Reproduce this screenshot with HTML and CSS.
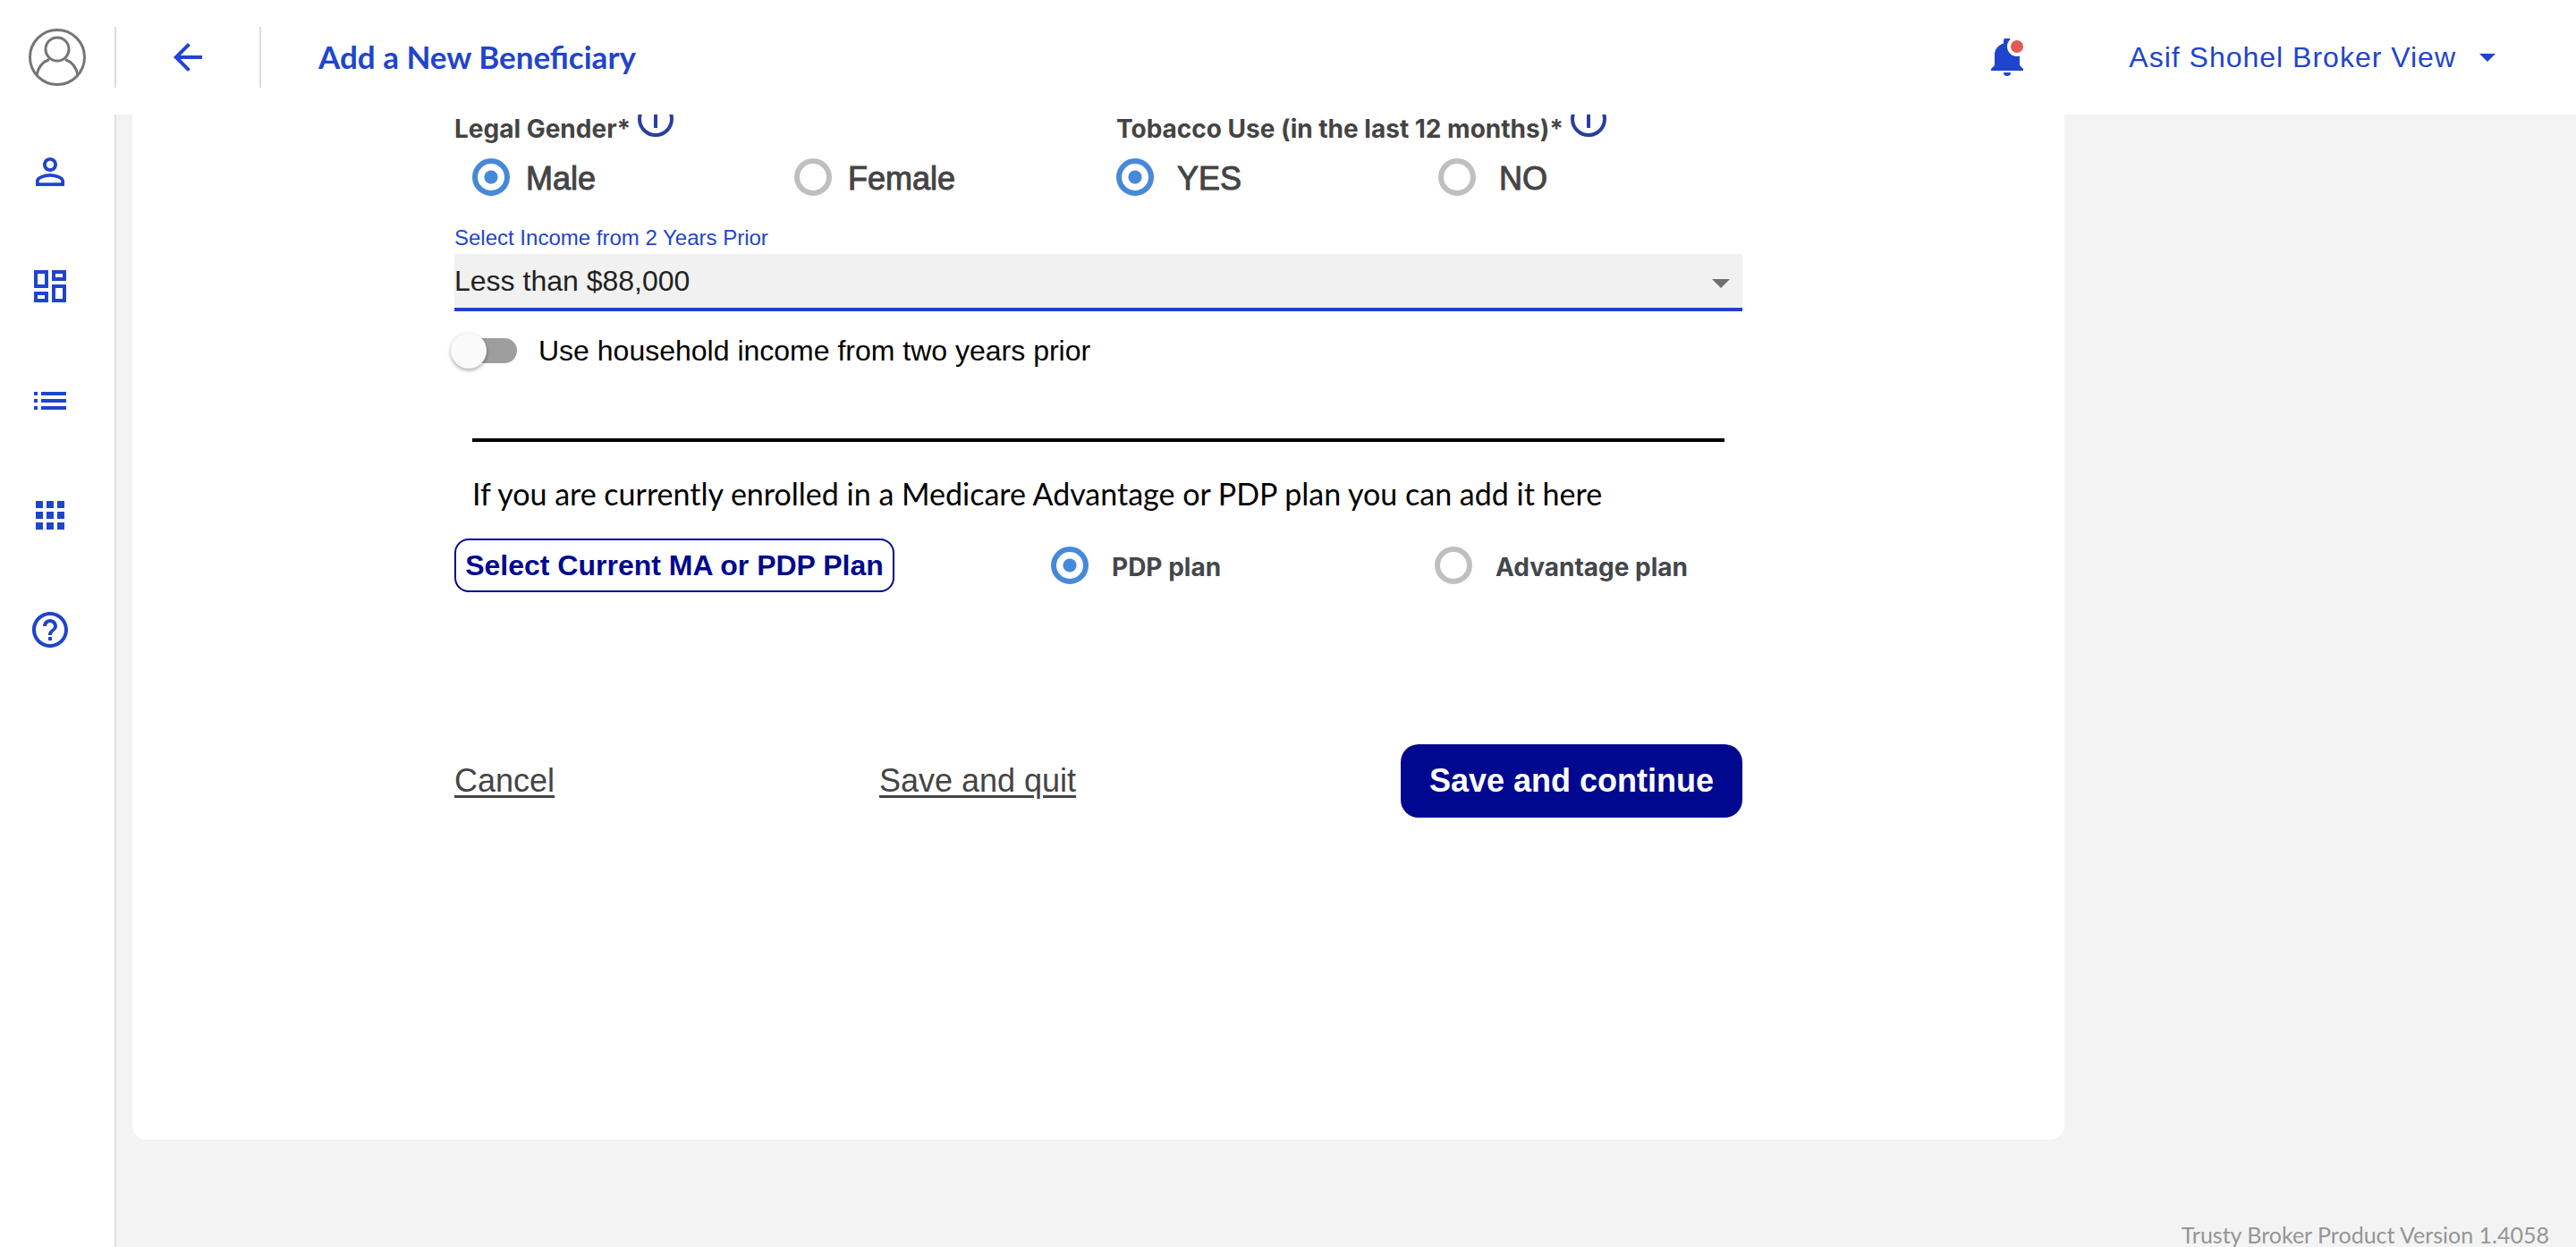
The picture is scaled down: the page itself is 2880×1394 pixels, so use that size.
FILE: index.html
```html
<!DOCTYPE html>
<html lang="en">
<head>
<meta charset="utf-8">
<meta name="viewport" content="width=device-width, initial-scale=1">
<title>Add a New Beneficiary</title>
<link rel="stylesheet" href="styles.css">
</head>
<body>
<header class="topbar">
  <a class="avatar" href="#" aria-label="Profile">
    <svg viewBox="0 0 64 64" fill="none" stroke="#757575" stroke-width="3"><circle cx="32" cy="32" r="30.500"/><circle cx="32" cy="23" r="13"/><path d="M9 52C10.500 44 15 37.500 23 34.500M55 52C53.500 44 49 37.500 41 34.500"/></svg>
  </a>
  <a class="back" href="#" aria-label="Back">
    <svg viewBox="0 0 24 24" fill="currentColor"><path d="M20 11H7.830l5.590-5.590L12 4l-8 8 8 8 1.410-1.410L7.830 13H20v-2z"/></svg>
  </a>
  <h1 class="title">Add a New Beneficiary</h1>
  <button class="bell" type="button" aria-label="Notifications">
    <svg viewBox="0 0 36 42"><path fill="#1f45cc" d="M14 3a4 4 0 0 1 8 0v2.500C28 7.500 32 12 32 18v12l4 4v2H0v-2l4-4V18C4 12 8 7.500 14 5.500z"/><path fill="#1f45cc" d="M14 38h8a4 4 0 0 1-8 0z"/><circle cx="29" cy="9" r="11" fill="#fff"/><circle cx="29" cy="9" r="7" fill="#e05a57"/></svg>
  </button>
  <button class="account" type="button">Asif Shohel Broker View
    <svg viewBox="0 0 18 9" fill="currentColor"><path d="M0 0h18L9 9z"/></svg>
  </button>
</header>
<div class="shell">
  <nav class="sidebar" aria-label="Main">
    <a href="#" aria-label="Beneficiaries"><svg viewBox="0 0 24 24" fill="currentColor"><path d="M12 5.900c1.160 0 2.100.94 2.100 2.100s-.94 2.100-2.100 2.100S9.900 9.160 9.900 8s.94-2.100 2.100-2.100m0 9c2.970 0 6.100 1.460 6.100 2.100v1.100H5.900V17c0-.64 3.130-2.100 6.100-2.100M12 4C9.790 4 8 5.790 8 8s1.790 4 4 4 4-1.790 4-4-1.790-4-4-4zm0 9c-2.670 0-8 1.340-8 4v3h16v-3c0-2.660-5.330-4-8-4z"/></svg></a>
    <a href="#" aria-label="Dashboard"><svg viewBox="0 0 24 24" fill="currentColor"><path d="M19 5v2h-4V5h4M9 5v6H5V5h4m10 8v6h-4v-6h4M9 17v2H5v-2h4M21 3h-8v6h8V3zM11 3H3v10h8V3zm10 8h-8v10h8V11zm-10 4H3v6h8v-6z"/></svg></a>
    <a href="#" aria-label="List"><svg viewBox="0 0 24 24" fill="currentColor"><path d="M3 13h2v-2H3v2zm0 4h2v-2H3v2zm0-8h2V7H3v2zm4 4h14v-2H7v2zm0 4h14v-2H7v2zM7 7v2h14V7H7z"/></svg></a>
    <a href="#" aria-label="Apps"><svg viewBox="0 0 24 24" fill="currentColor"><path d="M4 8h4V4H4v4zm6 12h4v-4h-4v4zm-6 0h4v-4H4v4zm0-6h4v-4H4v4zm6 0h4v-4h-4v4zm6-10v4h4V4h-4zm-6 4h4V4h-4v4zm6 6h4v-4h-4v4zm0 6h4v-4h-4v4z"/></svg></a>
    <a href="#" aria-label="Help"><svg viewBox="0 0 24 24" fill="currentColor"><path d="M11 18h2v-2h-2v2zm1-16C6.480 2 2 6.480 2 12s4.480 10 10 10 10-4.480 10-10S17.520 2 12 2zm0 18c-4.410 0-8-3.590-8-8s3.590-8 8-8 8 3.590 8 8-3.590 8-8 8zm0-14c-2.210 0-4 1.790-4 4h2c0-1.100.9-2 2-2s2 .9 2 2c0 2-3 1.750-3 5h2c0-2.250 3-2.500 3-5 0-2.210-1.790-4-4-4z"/></svg></a>
  </nav>
  <main class="content">
    <form class="card">
      <div class="questions">
        <div class="question" role="radiogroup" aria-labelledby="gender-label">
          <div class="question-head">
            <span id="gender-label">Legal Gender*</span>
            <svg class="info" viewBox="0 0 48 48" fill="none" stroke="#2a3f9d"><circle cx="24" cy="24" r="18" stroke-width="4"/><path d="M24 18v16M24 12v4" stroke-width="4"/></svg>
          </div>
          <div class="options options-inset">
            <label class="option"><input class="radio" type="radio" name="gender" checked><span>Male</span></label>
            <label class="option"><input class="radio" type="radio" name="gender"><span>Female</span></label>
          </div>
        </div>
        <div class="question" role="radiogroup" aria-labelledby="tobacco-label">
          <div class="question-head">
            <span id="tobacco-label">Tobacco Use (in the last 12 months)*</span>
            <svg class="info" viewBox="0 0 48 48" fill="none" stroke="#2a3f9d"><circle cx="24" cy="24" r="18" stroke-width="4"/><path d="M24 18v16M24 12v4" stroke-width="4"/></svg>
          </div>
          <div class="options">
            <label class="option option-wide"><input class="radio" type="radio" name="tobacco" checked><span>YES</span></label>
            <label class="option option-wide"><input class="radio" type="radio" name="tobacco"><span>NO</span></label>
          </div>
        </div>
      </div>
      <label class="field-label" for="income">Select Income from 2 Years Prior</label>
      <div class="select-wrap">
        <select class="select" id="income"><option>Less than $88,000</option></select>
        <svg class="select-arrow" viewBox="0 0 20 10" fill="#6f6f6f"><path d="M0 0h20L10 10z"/></svg>
      </div>
      <label class="switch-row"><input class="switch" type="checkbox">Use household income from two years prior</label>
      <hr class="rule">
      <p class="note">If you are currently enrolled in a Medicare Advantage or PDP plan you can add it here</p>
      <div class="plan-row">
        <button class="outline-button" type="button">Select Current MA or PDP Plan</button>
        <label class="plan"><input class="radio" type="radio" name="plan" checked><span>PDP plan</span></label>
        <label class="plan"><input class="radio" type="radio" name="plan"><span>Advantage plan</span></label>
      </div>
      <div class="actions">
        <a class="action-link" href="#">Cancel</a>
        <a class="action-link" href="#">Save and quit</a>
        <button class="primary-button" type="submit">Save and continue</button>
      </div>
    </form>
    <footer class="version">Trusty Broker Product Version 1.4058</footer>
  </main>
</div>
</body>
</html>
```
FILE: styles.css
```css
:root {
  --blue: #1f45cc;
  --navy: #00088f;
  --radio: #4689d9;
  --ink: #444;
  --sans: "Liberation Sans", Arial, sans-serif;
}
* { box-sizing: border-box; }
body {
  margin: 0;
  min-height: 100vh;
  display: flex;
  flex-direction: column;
  background: #f3f3f3;
  font-family: var(--sans);
  font-size: 32px;
  color: #000;
}
svg { display: block; }
button { font-family: inherit; border: 0; background: none; padding: 0; cursor: pointer; }

/* Top bar */
.topbar {
  position: sticky;
  top: 0;
  z-index: 2;
  display: flex;
  align-items: center;
  height: 128px;
  background: #fff;
  color: var(--blue);
}
.avatar { width: 128px; padding: 0 32px; }
.back {
  width: 164px;
  height: 68px;
  display: flex;
  align-items: center;
  justify-content: center;
  border: solid #dcdcdc;
  border-width: 0 2px;
  color: inherit;
}
.back svg { width: 48px; }
.title {
  flex: 1;
  margin: 0;
  padding: 0 0 2px 64px;
  font: 700 35px/44px Lato, sans-serif;
}
.bell svg { width: 36px; }
.account {
  display: flex;
  align-items: center;
  gap: 26px;
  margin-left: 118px;
  padding-right: 90px;
  font-size: 32px;
  letter-spacing: 1px;
  color: inherit;
}
.account svg { width: 18px; }

/* Sidebar and content */
.shell { flex: 1; display: flex; }
.sidebar {
  width: 130px;
  display: flex;
  flex-direction: column;
  padding: 40px 0 0 32px;
  gap: 80px;
  background: #fff;
  border-right: 2px solid #e0e0e0;
}
.sidebar a { width: 48px; color: var(--blue); }
.content {
  flex: 1;
  display: flex;
  flex-direction: column;
  justify-content: space-between;
  padding-left: 18px;
}
.card {
  max-width: 2160px;
  padding: 0 360px 360px;
  background: #fff;
  border-radius: 0 0 16px 16px;
}

/* Form */
.questions { display: grid; grid-template-columns: 37fr 35fr; }
.question-head {
  display: flex;
  height: 32px;
  align-items: center;
  gap: 4px;
  color: var(--ink);
  font: 700 28px/32px Inter, sans-serif;
}
.info { width: 48px; margin-top: -22px; }
.options { display: flex; padding-top: 16px; color: var(--ink); }
.options-inset { padding-left: 20px; }
.option {
  flex: 0 0 360px;
  display: flex;
  align-items: center;
  gap: 18px;
  height: 44px;
  font-size: 36px;
  -webkit-text-stroke: 1px var(--ink);
}
.option span, .plan span { padding-top: 4px; }
.option-wide { gap: 26px; }
.radio {
  appearance: none;
  flex: none;
  width: 42px;
  height: 42px;
  margin: 0;
  border: 6px solid #bfbfbf;
  border-radius: 50%;
}
.radio:checked {
  border-color: var(--radio);
  background: radial-gradient(circle, var(--radio) 7px, #fff 8px);
}
.field-label {
  display: block;
  margin-top: 30px;
  padding-bottom: 2px;
  color: var(--blue);
  font-size: 24px;
  line-height: 32px;
}
.select-wrap { position: relative; }
.select {
  appearance: none;
  width: 100%;
  height: 64px;
  padding: 0 64px 0 0;
  border: 0;
  border-bottom: 4px solid var(--blue);
  border-radius: 0;
  background: #f1f1f1;
  color: #212121;
  font: 32px/40px var(--sans);
}
.select-arrow { position: absolute; right: 14px; top: 28px; width: 20px; }
.switch-row {
  display: flex;
  align-items: center;
  gap: 24px;
  height: 40px;
  margin-top: 24px;
}
.switch {
  appearance: none;
  position: relative;
  width: 68px;
  height: 28px;
  margin: 0 0 0 2px;
  border-radius: 14px;
  background: #9e9e9e;
}
.switch::before {
  content: "";
  position: absolute;
  left: -6px;
  top: -6px;
  width: 40px;
  height: 40px;
  border-radius: 50%;
  background: #fafafa;
  box-shadow: 0 2px 4px rgba(0, 0, 0, .35);
}
.rule { height: 4px; margin: 78px 20px 0; border: 0; background: #000; }
.note {
  margin: 38px 20px 0;
  font: 400 34px/40px Lato, sans-serif;
}
.plan-row { display: flex; align-items: center; margin-top: 30px; }
.outline-button {
  width: 492px;
  height: 60px;
  margin-right: 175px;
  border: 2px solid var(--navy);
  border-radius: 16px;
  color: var(--navy);
  font-size: 32px;
  font-weight: 700;
}
.plan {
  flex: 1;
  display: flex;
  align-items: center;
  gap: 26px;
  color: #44474b;
  font: 700 28px/32px Inter, sans-serif;
}
.plan:last-child { flex: 0 0 344px; }
.actions {
  display: flex;
  align-items: center;
  justify-content: space-between;
  margin-top: 170px;
}
.action-link { color: var(--ink); font-size: 36px; text-underline-offset: 4px; }
.primary-button {
  width: 382px;
  height: 82px;
  border-radius: 20px;
  background: var(--navy);
  color: #fff;
  font-size: 36px;
  font-weight: 700;
}
.version {
  padding-right: 30px;
  color: #959595;
  font: 25px/28px Lato, sans-serif;
  text-align: right;
}
```
